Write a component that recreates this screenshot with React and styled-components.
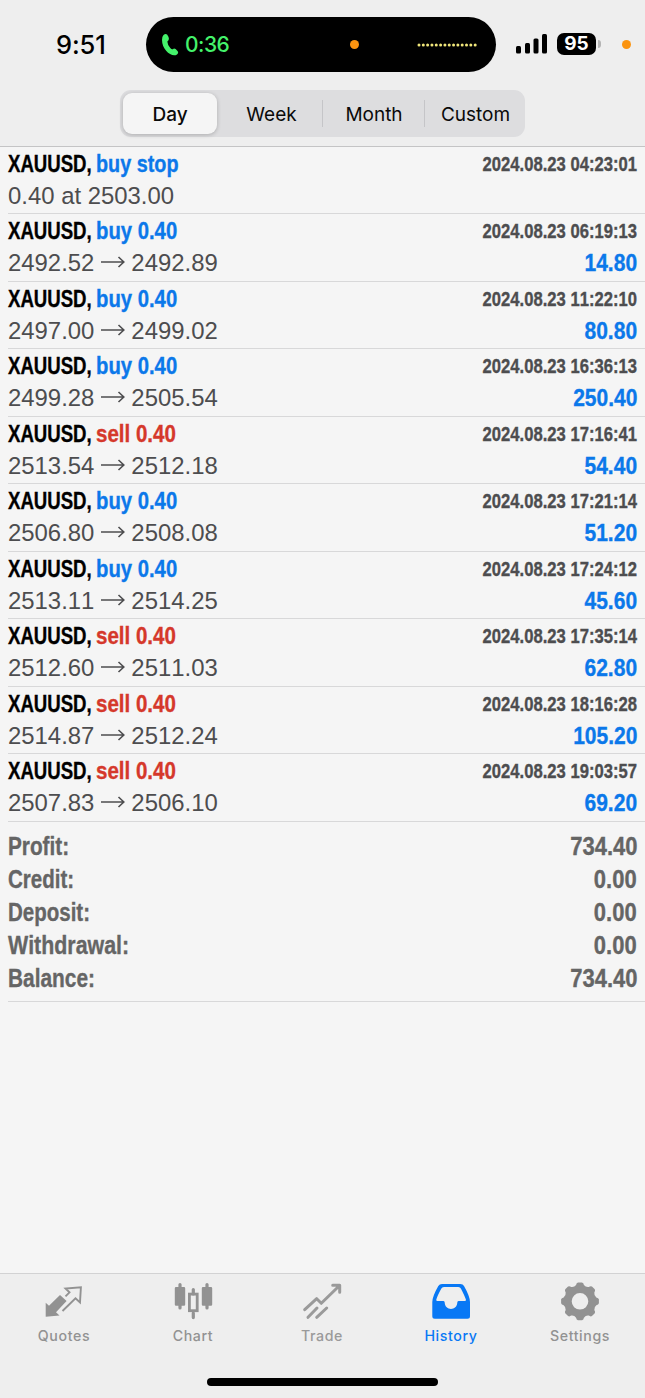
import React from "react";
import styled, { createGlobalStyle } from "styled-components";

const GlobalStyle = createGlobalStyle`
  * { box-sizing: border-box; }
  body { margin: 0; background: #f5f5f5; }
`;

const Screen = styled.div`
  display: flex;
  flex-direction: column;
  width: 645px;
  height: 1398px;
  overflow: hidden;
  background: #f5f5f5;
  font-family: "Liberation Sans", Arial, sans-serif;
`;

const Header = styled.header`
  height: 147px;
  flex: none;
  background: #eeeeee;
  border-bottom: 1px solid #c4c4c5;
`;

const StatusBar = styled.div`
  display: flex;
  align-items: center;
  height: 72px;
  padding: 17px 14px 0 0;
  font-family: Inter, sans-serif;
`;

const Clock = styled.div`
  width: 146px;
  padding-left: 56px;
  font-size: 25.5px;
  line-height: 30px;
  font-weight: 550;
  letter-spacing: -0.1px;
  color: #000;
`;

const Island = styled.div`
  display: flex;
  align-items: center;
  width: 350px;
  height: 55px;
  padding: 0 19px 0 15px;
  border-radius: 28px;
  background: #000;
`;

const CallTime = styled.span`
  width: 165px;
  margin-left: 6px;
  font-size: 21px;
  font-weight: 500;
  letter-spacing: -0.5px;
  color: #44f26b;
`;

const Dot = styled.i`
  width: 9px;
  height: 9px;
  border-radius: 50%;
  background: #fb9410;
`;

const Wave = styled.svg`
  margin-left: auto;
`;

const Signal = styled.svg`
  margin: -1px 0 0 20px;
`;

const Battery = styled.div`
  display: flex;
  align-items: center;
  justify-content: center;
  width: 39px;
  height: 22px;
  margin: -2px 0 0 9px;
  border-radius: 7px;
  background: #000;
  color: #fff;
  font-size: 19px;
  font-weight: 650;
`;

const BatteryTip = styled.i`
  width: 3px;
  height: 8px;
  margin: -2px auto 0 2px;
  border-radius: 0 3px 3px 0;
  background: #b4b4b4;
`;

const Segments = styled.nav`
  display: flex;
  width: 405px;
  height: 47px;
  margin: 18px 0 0 120px;
  padding: 3px 0 3px 3px;
  border-radius: 11px;
  background: #dddddf;
  font-family: Inter, sans-serif;
`;

const Segment = styled.div`
  display: flex;
  align-items: center;
  justify-content: center;
  width: ${(p) => p.$width}px;
  padding: 1px 0 0 ${(p) => p.$shift || 0}px;
  font-size: 19px;
  font-weight: ${(p) => (p.$active ? 550 : 430)};
  color: #0a0a0a;
  border-radius: 9px;
  background: ${(p) => (p.$active ? "#f5f5f5" : "transparent")};
  box-shadow: ${(p) => (p.$active ? "0 1px 4px rgba(0,0,0,.22)" : "none")};
`;

const Divider = styled.i`
  width: 1px;
  height: 27px;
  margin-top: 7px;
  background: #c5c5c8;
`;

const List = styled.main`
  flex: 1;
  padding-left: 8px;
  font-kerning: none;
`;

const Deal = styled.article`
  height: 67.5px;
  padding-right: 8px;
  border-bottom: 1px solid #d8d8d9;
  &:first-child { height: 67px; }
`;

const Line = styled.div`
  display: flex;
  justify-content: space-between;
  height: ${(p) => p.$height}px;
  line-height: ${(p) => p.$height}px;
  white-space: nowrap;
`;

const Title = styled.div`
  display: flex;
`;

const Condensed = styled.span`
  display: block;
  font-size: ${(p) => p.$size || 24}px;
  font-weight: 700;
  color: ${(p) => p.$color};
  -webkit-text-stroke: 0.35px currentColor;
  transform: scaleX(${(p) => p.$scale});
  transform-origin: ${(p) => (p.$end ? "right" : "left")} center;
`;

const Symbol = styled(Condensed)`
  width: 88px;
`;

const Price = styled.div`
  display: flex;
  font-size: 23.9px;
  color: #4d4d4f;
`;

const Arrow = styled.svg`
  width: 24px;
  height: 12px;
  margin: 8px 6px 0 7px;
`;

const Summary = styled.section`
  height: 180px;
  padding: 8.5px 8px 0 0;
  border-bottom: 1px solid #d8d8d9;
`;

const TabBar = styled.footer`
  display: flex;
  flex: none;
  height: 125px;
  background: #eeeeee;
  border-top: 1px solid #d2d2d3;
`;

const Tab = styled.div`
  display: flex;
  flex-direction: column;
  align-items: center;
  width: 129px;
  padding: 6px 1px 0 0;
  color: ${(p) => p.$color};
  svg { display: block; overflow: visible; }
`;

const TabLabel = styled.span`
  margin-top: 6px;
  font-family: Inter, sans-serif;
  font-size: 14.2px;
  line-height: 20px;
  font-weight: 500;
  letter-spacing: 0.6px;
`;

const HomeBar = styled.div`
  height: 20px;
  flex: none;
  margin-top: -20px;
  display: flex;
  justify-content: center;
  &::after {
    content: "";
    width: 231px;
    height: 8px;
    border-radius: 4px;
    background: #000;
  }
`;

const BLUE = "#0b78ea";
const RED = "#d5382b";
const GREY = "#929292";

const deals = [
  ["buy stop", "04:23:01"],
  ["buy 0.40", "06:19:13", "2492.52", "2492.89", "14.80"],
  ["buy 0.40", "11:22:10", "2497.00", "2499.02", "80.80"],
  ["buy 0.40", "16:36:13", "2499.28", "2505.54", "250.40"],
  ["sell 0.40", "17:16:41", "2513.54", "2512.18", "54.40"],
  ["buy 0.40", "17:21:14", "2506.80", "2508.08", "51.20"],
  ["buy 0.40", "17:24:12", "2513.11", "2514.25", "45.60"],
  ["sell 0.40", "17:35:14", "2512.60", "2511.03", "62.80"],
  ["sell 0.40", "18:16:28", "2514.87", "2512.24", "105.20"],
  ["sell 0.40", "19:03:57", "2507.83", "2506.10", "69.20"],
];

const totals = [
  ["Profit:", "734.40", 0.83],
  ["Credit:", "0.00", 0.82],
  ["Deposit:", "0.00", 0.82],
  ["Withdrawal:", "0.00", 0.855],
  ["Balance:", "734.40", 0.835],
];

const actionScale = { "buy stop": 0.825, "buy 0.40": 0.845, "sell 0.40": 0.855 };

function DealRow({ deal: [action, time, from, to, profit] }) {
  return (
    <Deal>
      <Line $height={34}>
        <Title>
          <Symbol $color="#000" $scale={0.775}>XAUUSD,</Symbol>
          <Condensed $color={action.startsWith("sell") ? RED : BLUE} $scale={actionScale[action]}>
            {action}
          </Condensed>
        </Title>
        <Condensed $end $size={19.5} $color="#4d4d4f" $scale={0.853}>
          2024.08.23 {time}
        </Condensed>
      </Line>
      <Line $height={30}>
        {from ? (
          <Price>
            {from}
            <Arrow viewBox="0 0 24 12" fill="none" stroke="#4d4d4f" strokeWidth="1.6">
              <path d="M0 6H22.500M17.500 1L22.800 6L17.500 11" />
            </Arrow>
            {to}
          </Price>
        ) : (
          <Price>0.40 at 2503.00</Price>
        )}
        {profit && <Condensed $end $color={BLUE} $scale={0.875}>{profit}</Condensed>}
      </Line>
    </Deal>
  );
}

const QuotesIcon = () => (
  <svg width="40" height="40" viewBox="0 0 40 40">
    <path d="M1.700 36.800V22.700L5 25.700L16 15L22.600 21L12 32.300L15.500 35.500Z" fill="currentColor" />
    <path d="M18.500 31L31.500 18.300L36 22.500L36.900 7.200L21.500 8.500L25.500 12.300L21.500 16.300" fill="none" stroke="currentColor" strokeWidth="1.900" />
  </svg>
);

const ChartIcon = () => (
  <svg width="40" height="40" viewBox="0 0 40 40" fill="none" stroke="currentColor" strokeLinecap="round">
    <path d="M7 4.600V28M34 4.600V28M20.300 9.600V14M20.300 33V37.600" strokeWidth="3.200" />
    <rect x="3" y="8.200" width="8" height="16.300" strokeWidth="2.400" fill="currentColor" strokeLinejoin="round" />
    <rect x="30" y="8.200" width="8" height="16.300" strokeWidth="2.400" fill="currentColor" strokeLinejoin="round" />
    <rect x="16.400" y="14.100" width="7.800" height="16.600" strokeWidth="2.800" />
  </svg>
);

const TradeIcon = () => (
  <svg width="40" height="40" viewBox="-0.5 0 40 40" fill="none" stroke="currentColor" strokeWidth="3" strokeLinecap="round" strokeLinejoin="round">
    <path d="M2.200 29.700L14.200 18.700L18.800 23.300L36.800 5.700M30.200 5.300H37.200V12.300" />
    <path d="M5.500 37.300L14.500 28M14.200 37.300L24.200 28" />
  </svg>
);

const HistoryIcon = () => (
  <svg width="40" height="40" viewBox="-0.5 0 40 40">
    <path
      fill="currentColor"
      fillRule="evenodd"
      d="M10.500 4H28.800Q31.500 4 32.500 6Q38.500 16.500 38.500 22V36.200Q38.500 38.700 36 38.700H3.300Q.8 38.700 .8 36.200V22Q.8 16.500 6.800 6Q8 4 10.500 4ZM12.500 7Q10.500 7 9.700 8.700Q6 15.500 4.800 19.500Q4.500 21 6 21H12Q13.200 21 13.200 22.500C13.500 31 25.500 31 25.800 22.500Q25.800 21 27 21H33.200Q34.800 21 34.400 19.500Q33 15.500 29.500 8.700Q28.800 7 26.800 7Z"
    />
  </svg>
);

const polar = (deg, r) => {
  const a = (deg * Math.PI) / 180;
  return `${(19.5 + r * Math.sin(a)).toFixed(2)} ${(21.3 - r * Math.cos(a)).toFixed(2)}`;
};

const gearPath =
  `M${polar(-6, 19)}` +
  Array.from({ length: 8 }, (_, i) => {
    const t = i * 45;
    return (
      `L${polar(t + 6, 19)}Q${polar(t + 11, 18.8)} ${polar(t + 13.5, 16.8)}` +
      `Q${polar(t + 22.5, 15)} ${polar(t + 31.5, 16.8)}Q${polar(t + 34, 18.8)} ${polar(t + 39, 19)}`
    );
  }).join("") +
  "ZM19.5 13A8.3 8.3 0 1 0 19.500 29.600A8.3 8.3 0 1 0 19.500 13Z";

const SettingsIcon = () => (
  <svg width="40" height="40" viewBox="-0.5 0 40 40">
    <path d={gearPath} fill="currentColor" fillRule="evenodd" />
  </svg>
);

const tabs = [
  ["Quotes", QuotesIcon, GREY],
  ["Chart", ChartIcon, GREY],
  ["Trade", TradeIcon, "#9a9a9a"],
  ["History", HistoryIcon, "#0878f5"],
  ["Settings", SettingsIcon, GREY],
];

export default function App() {
  return (
    <Screen>
      <GlobalStyle />
      <Header>
        <StatusBar>
          <Clock>9:51</Clock>
          <Island>
            <svg width="18" height="24" viewBox="0 0 18 24">
              <path d="M2.500 2Q5.500-.5 7.300 3.500Q8.800 6.500 6.500 8.200Q6 11 9.300 15Q11 17 12.500 15.700Q14 15 16.500 18Q18 20 16 21.500C11 25 1 17 1 7Q1 3.500 2.500 2Z" fill="#44f26b" />
            </svg>
            <CallTime>0:36</CallTime>
            <Dot />
            <Wave width="60" height="4" viewBox="0 0 60 4">
              {Array.from({ length: 14 }, (_, i) => (
                <circle key={i} cx={2 + i * 4.32} cy="2" r="1.500" fill="#f0e67a" />
              ))}
            </Wave>
          </Island>
          <Signal width="32" height="20" viewBox="0 0 32 20">
            <rect x="0" y="12" width="5" height="7.500" rx="1.500" />
            <rect x="9" y="9" width="5" height="10.500" rx="1.500" />
            <rect x="17.500" y="4.500" width="5" height="15" rx="1.500" />
            <rect x="26" y="0" width="5" height="19.500" rx="1.500" />
          </Signal>
          <Battery>95</Battery>
          <BatteryTip />
          <Dot />
        </StatusBar>
        <Segments>
          <Segment $width={94} $active>Day</Segment>
          <Segment $width={105} $shift={4}>Week</Segment>
          <Divider />
          <Segment $width={101} $shift={1}>Month</Segment>
          <Divider />
          <Segment $width={100} $shift={1}>Custom</Segment>
        </Segments>
      </Header>
      <List>
        {deals.map((deal) => (
          <DealRow key={deal[1]} deal={deal} />
        ))}
        <Summary>
          {totals.map(([label, value, scale]) => (
            <Line key={label} $height={33}>
              <Condensed $size={25} $color="#656565" $scale={scale}>{label}</Condensed>
              <Condensed $end $size={25} $color="#656565" $scale={0.88}>{value}</Condensed>
            </Line>
          ))}
        </Summary>
      </List>
      <TabBar>
        {tabs.map(([label, Icon, color]) => (
          <Tab key={label} $color={color}>
            <Icon />
            <TabLabel>{label}</TabLabel>
          </Tab>
        ))}
      </TabBar>
      <HomeBar />
    </Screen>
  );
}
